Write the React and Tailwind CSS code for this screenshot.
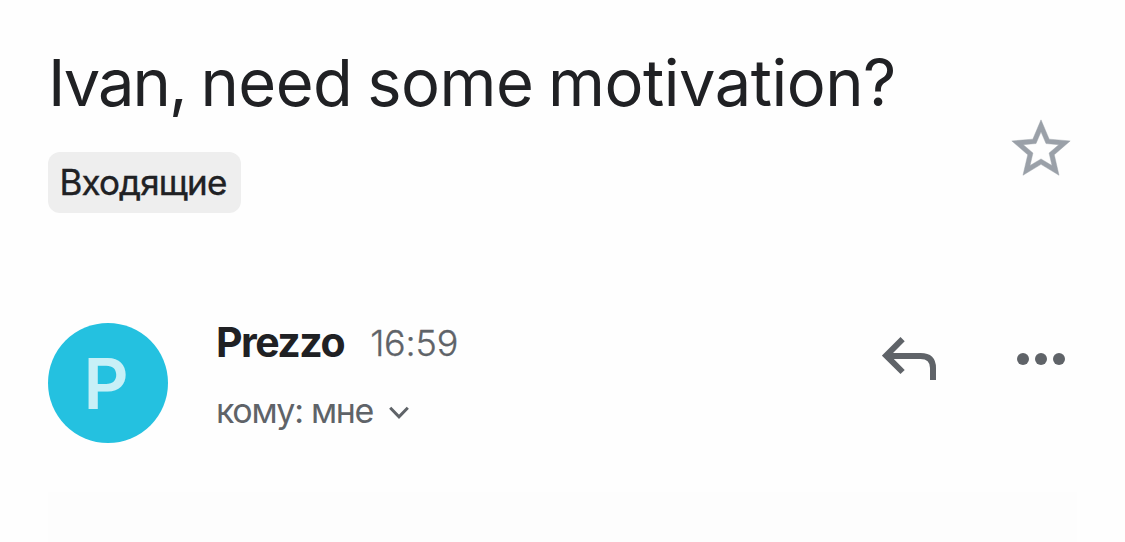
function StarIcon() {
    return (
        <svg viewBox="0 0 24 24" className="size-[70px] fill-[#9aa0a8] stroke-[#9aa0a8]" strokeWidth="0.15">
            <path d="M22 9.24l-7.19-.62L12 2 9.19 8.63 2 9.24l5.46 4.73L5.82 21 12 17.27 18.18 21l-1.63-7.03L22 9.24zM12 15.4l-3.76 2.27 1-4.28-3.32-2.88 4.38-.38L12 6.1l1.71 4.04 4.38.38-3.32 2.88 1 4.28L12 15.4z" />
        </svg>
    );
}

function ReplyIcon() {
    return (
        <svg viewBox="0 0 56 44" className="w-[56px] h-[44px] fill-none stroke-[#5f6368]" strokeWidth="6">
            <path d="M20.6 2.2L4.2 18.6l16.4 16.4M5 18.9h33.5Q51 18.9 51 31v11.9" />
        </svg>
    );
}

function MoreIcon() {
    return (
        <svg viewBox="0 0 48 12" className="w-[48px] h-[12px] fill-[#5f6368]">
            <circle cx="6" cy="6" r="6" />
            <circle cx="24" cy="6" r="6" />
            <circle cx="42" cy="6" r="6" />
        </svg>
    );
}

function ChevronIcon() {
    return (
        <svg viewBox="0 0 20 13" className="w-5 h-[13px] fill-none stroke-[#5f6368]" strokeWidth="3">
            <path d="M1.2 1.8l8.8 9 8.8-9" />
        </svg>
    );
}

export default function App() {
    return (
        <div className="flex flex-col w-[1125px] h-[542px] px-12 overflow-hidden bg-[#fefefe] font-['Inter','Liberation_Sans',sans-serif] text-[#202124]">
            <header className="flex justify-between h-[322px] pt-[44px]">
                <div>
                    <h1 className="h-[78px] text-[65px] leading-[78px] tracking-[-0.5px] [word-spacing:-3px] whitespace-nowrap">
                        <span className="tracking-[-2px]">Ivan,</span> need some motivation?
                    </h1>
                    <span className="flex items-center justify-center mt-[30px] pr-[3px] w-[193px] h-[61px] rounded-xl bg-[#eeeeee] text-[35px] tracking-[-0.9px] [-webkit-text-stroke:0.4px_#202124]">
                        Входящие
                    </span>
                </div>
                <button className="self-start mt-[70px] mr-[1px]" aria-label="Star">
                    <StarIcon />
                </button>
            </header>

            <section className="flex h-[170px]">
                <div className="flex items-center justify-center mt-[1px] pr-1 size-[120px] rounded-full bg-[#24c1e0] text-[#c8f0f7] text-[70px] font-semibold">
                    P
                </div>
                <div className="ml-12 grow">
                    <div className="flex items-center h-[42px] whitespace-nowrap">
                        <span className="text-[41px] font-bold tracking-[-1.5px]">Prezzo</span>
                        <span className="ml-[26px] text-[36px] font-light tracking-[-0.2px] text-[#5f6368] [-webkit-text-stroke:0.3px_#5f6368]">16:59</span>
                    </div>
                    <div className="flex items-center mt-[25px] h-[42px] text-[34px] tracking-[-1.3px] text-[#5f6368] whitespace-nowrap">
                        кому: мне
                        <span className="mt-1 ml-4">
                            <ChevronIcon />
                        </span>
                    </div>
                </div>
                <div className="flex items-start mr-3 pt-[15px]">
                    <ReplyIcon />
                    <span className="mt-[16px] ml-[79px]">
                        <MoreIcon />
                    </span>
                </div>
            </section>

            <div className="grow w-[1029px] bg-[#fdfdfd]" />
        </div>
    );
}
